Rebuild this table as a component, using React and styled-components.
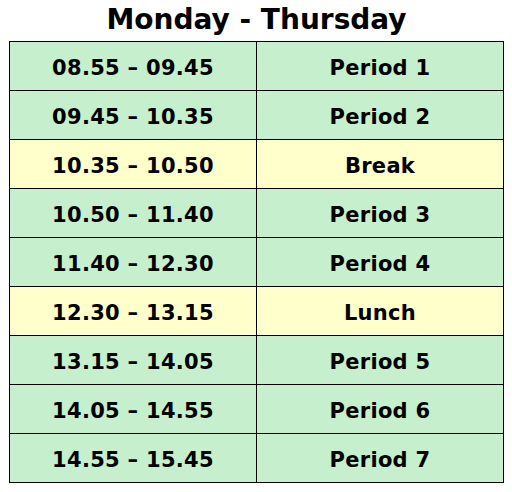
import React from 'react';
import styled, { createGlobalStyle } from 'styled-components';

const GlobalStyle = createGlobalStyle`
  body {
    margin: 0;
    background: #ffffff;
    font-family: "DejaVu Sans", Verdana, sans-serif;
  }
`;

const schedule = [
    { time: '08.55 – 09.45', label: 'Period 1' },
    { time: '09.45 – 10.35', label: 'Period 2' },
    { time: '10.35 – 10.50', label: 'Break', pause: true },
    { time: '10.50 – 11.40', label: 'Period 3' },
    { time: '11.40 – 12.30', label: 'Period 4' },
    { time: '12.30 – 13.15', label: 'Lunch', pause: true },
    { time: '13.15 – 14.05', label: 'Period 5' },
    { time: '14.05 – 14.55', label: 'Period 6' },
    { time: '14.55 – 15.45', label: 'Period 7' },
];

function App() {
    return (
        <Page>
            <GlobalStyle />
            <Title>Monday - Thursday</Title>
            <Table>
                <tbody>
                    {schedule.map((row) => (
                        <Row key={row.time} $pause={row.pause}>
                            <Cell>{row.time}</Cell>
                            <Cell>{row.label}</Cell>
                        </Row>
                    ))}
                </tbody>
            </Table>
        </Page>
    );
}

const Page = styled.div`
width: 512px;
padding: 0 8px 0 9px;
box-sizing: border-box;
`;

const Title = styled.h1`
margin: 0;
height: 41px;
line-height: 40px;
text-align: center;
font-size: 28px;
font-weight: bold;
color: #000;
`;

const Table = styled.table`
width: 495px;
border-collapse: collapse;
table-layout: fixed;
`;

const Row = styled.tr`
background: ${(p) => (p.$pause ? '#ffffcc' : '#c6efce')};
`;

const Cell = styled.td`
border: 1px solid #000;
height: 49px;
padding: 3px 0 0;
box-sizing: border-box;
text-align: center;
vertical-align: middle;
font-size: 21px;
font-weight: bold;
letter-spacing: 0.3px;
color: #000;
&:first-child{
    width: 247px;
}
`;

export default App;
